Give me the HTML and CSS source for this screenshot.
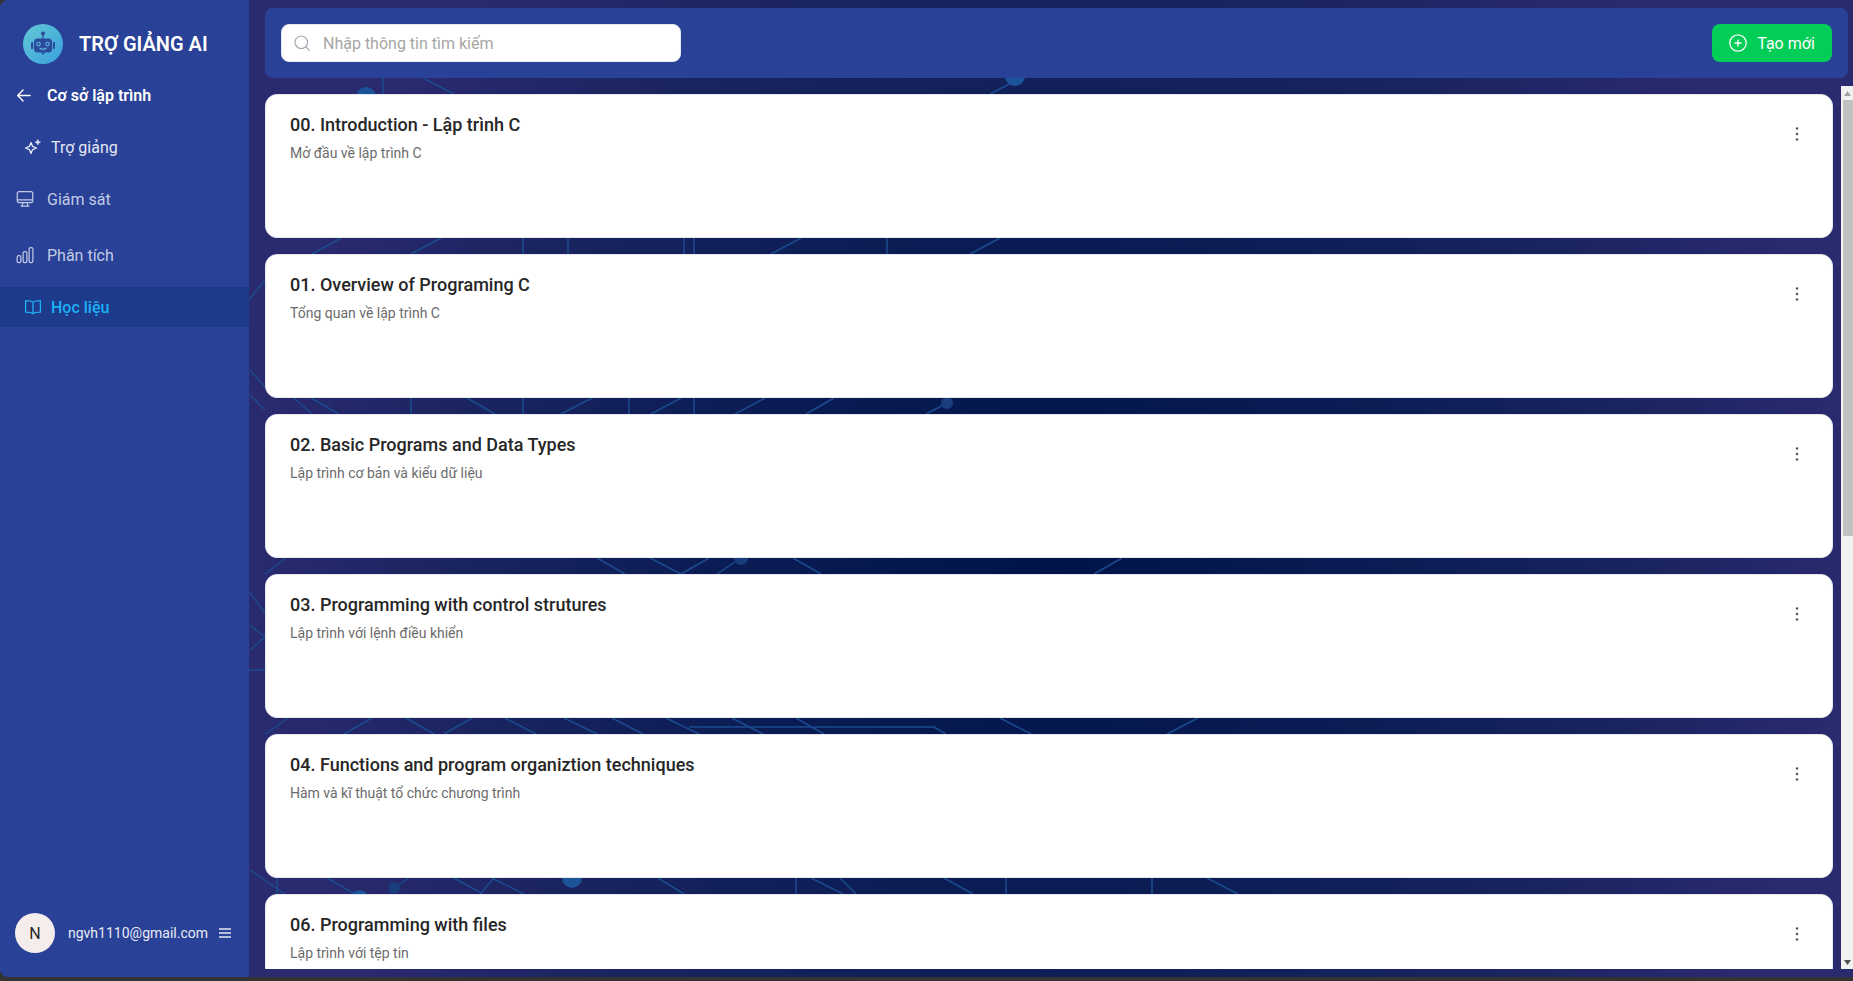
FILE: index.html
```html
<!DOCTYPE html>
<html lang="vi">
<head>
<meta charset="utf-8">
<title>Trợ giảng AI</title>
<link rel="stylesheet" href="styles.css">
</head>
<body>
<div class="app">
  <aside class="sidebar">
    <div class="brand">
      <svg class="brand-logo" viewBox="0 0 40 40">
        <defs><linearGradient id="lg" x1="0" y1="0" x2="1" y2="1"><stop offset="0" stop-color="#62c9d6"/><stop offset="1" stop-color="#3a9fdc"/></linearGradient></defs>
        <circle cx="20" cy="20" r="20" fill="url(#lg)"/>
        <circle cx="20" cy="9.5" r="2" fill="#2b4c9c"/>
        <path d="M20 11v4" stroke="#2b4c9c" stroke-width="1.2"/>
        <rect x="11" y="14.5" width="18" height="14" rx="3.5" fill="#2b4c9c"/>
        <rect x="8" y="18" width="2.2" height="7" rx="1" fill="#2b4c9c"/>
        <rect x="29.8" y="18" width="2.2" height="7" rx="1" fill="#2b4c9c"/>
        <path d="M18 28.5h4l-2 2.5z" fill="#2b4c9c"/>
        <circle cx="15.5" cy="20" r="1.8" fill="none" stroke="#62c0e0" stroke-width="1"/>
        <circle cx="24.5" cy="20" r="1.8" fill="none" stroke="#62c0e0" stroke-width="1"/>
        <path d="M17 24.2q3 2.2 6 0" fill="none" stroke="#62c0e0" stroke-width="1.1" stroke-linecap="round"/>
      </svg>
      <span class="brand-name">TRỢ GIẢNG AI</span>
    </div>
    <nav class="nav">
      <a class="nav-row nav-back">
        <svg class="icon-back" viewBox="0 0 16 16" fill="none" stroke="currentColor" stroke-width="1.5" stroke-linecap="round" stroke-linejoin="round"><path d="M15 8H2M7.5 2.2 1.8 8l5.7 5.8"/></svg>
        <span>Cơ sở lập trình</span>
      </a>
      <a class="nav-row nav-sub nav-light">
        <svg class="icon" viewBox="0 0 18 18" fill="none" stroke="currentColor" stroke-width="1.3" stroke-linejoin="round"><path d="M7 4.5 8.6 8.4 12.5 10 8.6 11.6 7 15.5 5.4 11.6 1.5 10 5.4 8.4z"/><path d="M13.8 1.5 14.6 3.4 16.5 4.2 14.6 5 13.8 6.9 13 5 11.1 4.2 13 3.4z" fill="currentColor" stroke-width=".6"/></svg>
        <span>Trợ giảng</span>
      </a>
      <a class="nav-row nav-top">
        <svg class="icon" viewBox="0 0 18 18" fill="none" stroke="currentColor" stroke-width="1.2" stroke-linejoin="round"><rect x="1.2" y="1.6" width="15.6" height="11" rx="2"/><path d="M1.2 9.8h15.6M6.8 12.6l-.6 3.4M11.2 12.6l.6 3.4M4.6 16.2h8.8"/></svg>
        <span>Giám sát</span>
      </a>
      <a class="nav-row nav-top nav-gap">
        <svg class="icon" viewBox="0 0 18 18" fill="none" stroke="currentColor" stroke-width="1.2"><rect x="1.1" y="9.6" width="3.8" height="7" rx="1.6"/><rect x="7.1" y="5.6" width="3.8" height="11" rx="1.6"/><rect x="13.1" y="1.6" width="3.8" height="15" rx="1.6"/></svg>
        <span>Phân tích</span>
      </a>
      <a class="nav-row nav-sub nav-active">
        <svg class="icon" viewBox="0 0 18 18" fill="none" stroke="currentColor" stroke-width="1.3" stroke-linejoin="round"><path d="M9 4.2C7.4 3 5 2.6 1.6 2.6v11.6c3.4 0 5.8.4 7.4 1.6 1.6-1.2 4-1.6 7.4-1.6V2.6C13 2.6 10.600 3 9 4.200zM9 4.200v11.600"/></svg>
        <span>Học liệu</span>
      </a>
    </nav>
    <div class="account">
      <span class="avatar">N</span>
      <span class="email">ngvh1110@gmail.com</span>
      <svg class="icon-menu" viewBox="0 0 12 10" stroke="currentColor" stroke-width="1.3"><path d="M0 1h12M0 5h12M0 9h12"/></svg>
    </div>
  </aside>

  <main class="main">
    <svg class="circuit" viewBox="249 0 1604 977" aria-hidden="true">
      <g class="trace">
        <path d="M383 78V94M423 78 454 94M1015 81 990 94"/>
        <path d="M341 238 312 254M441 238 411 254M523 238V254M568 238V254M684 238V254M694 238V254M801 238 771 254M887 238V254M1000 238 970 254M265 280 249 300"/>
        <path d="M311 398 339 414M294 398 312 414M411 398V414M467 398 495 414M523 398V414M592 398 561 414M629 398V414M681 398 651 414M694 398V414M765 398 735 414M834 398 806 414M947 403 926 414M250 395 265 410M250 370 265 387"/>
        <path d="M286 558 265 574M597 558 625 574M650 558 681 574M709 558 681 574M741 558 717 574M793 558 821 574M1122 558 1094 574M250 593 265 613M250 625 265 637 250 650M249 670H265"/>
        <path d="M288 718 265 734M372 718 344 734M406 718 434 734M472 718 444 734M505 718 536 734M564 718 597 734M612 718 643 734M666 718 699 734M732 718 763 734M796 718 824 734M1000 718 1031 734M689 727H934L946 734M1198 718 1167 734"/>
        <path d="M277 878V894M250 870 285 894M327 878 355 894M409 878 394 888M454 878 483 894M480 894 494 878M492 878 524 894M658 878 684 894M796 878V894M811 878 843 894M840 878 856 894M944 878 973 894M1006 878V894M1152 878V894M1207 878 1238 894"/>
      </g>
      <g class="node">
        <circle cx="366" cy="97" r="10"/>
        <circle cx="1015" cy="76" r="10"/>
        <circle cx="360" cy="899" r="9"/>
        <circle cx="572" cy="878" r="10"/>
      </g>
      <g class="node node-dim">
        <circle cx="947" cy="403" r="6"/>
        <circle cx="741" cy="558" r="7"/>
        <circle cx="394" cy="888" r="6"/>
      </g>
    </svg>
    <header class="topbar">
      <label class="search">
        <svg class="icon-search" viewBox="0 0 16 16" fill="none" stroke="currentColor" stroke-width="1.2" stroke-linecap="round"><circle cx="7.300" cy="7.300" r="6.300"/><path d="M12 12l3.300 3.300"/></svg>
        <input class="search-input" type="text" placeholder="Nhập thông tin tìm kiếm">
      </label>
      <button class="create" type="button">
        <svg class="icon-plus" viewBox="0 0 18 18" fill="none" stroke="currentColor" stroke-width="1.300"><circle cx="9" cy="9" r="8.200"/><path d="M9 5.500v7M5.500 9h7"/></svg>
        <span>Tạo mới</span>
      </button>
    </header>
    <div class="scroller">
      <section class="list">
        <article class="card">
          <div class="card-text"><h2 class="card-title">00. Introduction - Lập trình C</h2><p class="card-sub">Mở đầu về lập trình C</p></div>
          <svg class="kebab" viewBox="0 0 4 14" fill="currentColor"><circle cx="2" cy="1.500" r="1.300"/><circle cx="2" cy="7" r="1.300"/><circle cx="2" cy="12.500" r="1.300"/></svg>
        </article>
        <article class="card">
          <div class="card-text"><h2 class="card-title">01. Overview of Programing C</h2><p class="card-sub">Tổng quan về lập trình C</p></div>
          <svg class="kebab" viewBox="0 0 4 14" fill="currentColor"><circle cx="2" cy="1.500" r="1.300"/><circle cx="2" cy="7" r="1.300"/><circle cx="2" cy="12.500" r="1.300"/></svg>
        </article>
        <article class="card">
          <div class="card-text"><h2 class="card-title">02. Basic Programs and Data Types</h2><p class="card-sub">Lập trình cơ bản và kiểu dữ liệu</p></div>
          <svg class="kebab" viewBox="0 0 4 14" fill="currentColor"><circle cx="2" cy="1.500" r="1.300"/><circle cx="2" cy="7" r="1.300"/><circle cx="2" cy="12.500" r="1.300"/></svg>
        </article>
        <article class="card">
          <div class="card-text"><h2 class="card-title">03. Programming with control strutures</h2><p class="card-sub">Lập trình với lệnh điều khiển</p></div>
          <svg class="kebab" viewBox="0 0 4 14" fill="currentColor"><circle cx="2" cy="1.500" r="1.300"/><circle cx="2" cy="7" r="1.300"/><circle cx="2" cy="12.500" r="1.300"/></svg>
        </article>
        <article class="card">
          <div class="card-text"><h2 class="card-title">04. Functions and program organiztion techniques</h2><p class="card-sub">Hàm và kĩ thuật tổ chức chương trình</p></div>
          <svg class="kebab" viewBox="0 0 4 14" fill="currentColor"><circle cx="2" cy="1.500" r="1.300"/><circle cx="2" cy="7" r="1.300"/><circle cx="2" cy="12.500" r="1.300"/></svg>
        </article>
        <article class="card">
          <div class="card-text"><h2 class="card-title">06. Programming with files</h2><p class="card-sub">Lập trình với tệp tin</p></div>
          <svg class="kebab" viewBox="0 0 4 14" fill="currentColor"><circle cx="2" cy="1.500" r="1.300"/><circle cx="2" cy="7" r="1.300"/><circle cx="2" cy="12.500" r="1.300"/></svg>
        </article>
      </section>
      <div class="scrollbar" aria-hidden="true">
        <svg class="arrow" viewBox="0 0 7 5"><path d="M3.500 0 7 5H0z" fill="#a3a3a3"/></svg>
        <div class="track"><div class="thumb"></div></div>
        <svg class="arrow" viewBox="0 0 7 5"><path d="M0 0H7L3.500 5z" fill="#505050"/></svg>
      </div>
    </div>
  </main>
</div>
</body>
</html>
```
FILE: styles.css
```css
* { box-sizing: border-box; }
html, body { height: 100%; margin: 0; overflow: hidden; }
body { background: #333333; font-family: Roboto, "Noto Sans", sans-serif; }

.app { display: flex; height: 977px; }

.sidebar {
  width: 249px; flex: none; display: flex; flex-direction: column;
  background: #294196; border-radius: 8px 0 0 8px; color: #c3cbe6;
}
.brand { display: flex; align-items: center; gap: 16px; padding: 24px 0 0 23px; }
.brand-logo { width: 40px; height: 40px; flex: none; }
.brand-name { font-size: 20px; font-weight: 600; color: #fff; line-height: 40px; }

.nav { display: flex; flex-direction: column; gap: 12px; margin-top: 11px; }
.nav-row { display: flex; align-items: center; height: 40px; font-size: 16px; }
.nav-back { padding-left: 16px; gap: 16px; color: #fff; font-weight: 600; }
.icon-back { width: 15px; height: 15px; flex: none; }
.icon { width: 18px; height: 18px; flex: none; }
.nav-top { padding-left: 16px; gap: 13px; }
.nav-sub { padding-left: 24px; gap: 9px; }
.nav-light { color: #e6e9f5; }
.nav-gap { margin-top: 4px; }
.nav-active { background: #1e3a8a; color: #1cb0f6; font-weight: 500; }

.account { display: flex; align-items: center; margin-top: auto; padding: 0 0 24px 15px; }
.avatar {
  width: 40px; height: 40px; flex: none; display: flex; align-items: center; justify-content: center;
  border-radius: 50%; background: #f5ecec; color: #262626; font-size: 16px;
}
.email { margin-left: 13px; font-size: 14px; color: #e8ebf6; }
.icon-menu { width: 12px; height: 10px; margin-left: 11px; color: #e2e6f4; flex: none; }

.main {
  position: relative; isolation: isolate; flex: 1; min-width: 0; display: flex; flex-direction: column;
  padding: 8px 0 8px;
  background: radial-gradient(ellipse 802px 800px at 50% 57%, #00144a 0%, #0a1c53 40%, #1a2460 75%, #2a2a6e 100%);
}
.circuit { position: absolute; left: 0; top: 0; width: 1604px; height: 977px; z-index: -1; }
.trace { fill: none; stroke: #1b4b8e; stroke-width: 1.500; }
.node { fill: #1c5499; }
.node-dim { fill: #1a3d7e; }

.topbar {
  flex: none; display: flex; align-items: center; justify-content: space-between;
  height: 70px; margin: 0 5px 0 16px; padding: 0 16px;
  background: #294196; border-radius: 8px;
}
.search {
  display: flex; align-items: center; gap: 13px; width: 400px; height: 38px; padding: 0 12px;
  background: #fff; border-radius: 8px; border: 1px solid #e5e7eb; color: #a3a8b3;
}
.icon-search { width: 16px; height: 16px; flex: none; }
.search-input {
  flex: 1; min-width: 0; border: 0; outline: 0; padding: 0; background: none;
  font: 400 16px Roboto, sans-serif; color: #333;
}
.search-input::placeholder { color: #a6a6a6; opacity: 1; }
.create {
  display: flex; align-items: center; justify-content: center; gap: 10px; width: 120px; height: 38px;
  border: 0; padding: 0; background: #02cd56; color: #fff; border-radius: 8px;
  font: 400 16px Roboto, sans-serif;
}
.icon-plus { width: 18px; height: 18px; flex: none; }

.scroller { flex: 1; min-height: 0; display: flex; gap: 8px; margin: 8px 0 0 16px; }
.list {
  flex: 1; min-width: 0; overflow: hidden; display: flex; flex-direction: column; gap: 16px;
  padding-top: 8px;
}
.scrollbar { width: 12px; flex: none; display: flex; flex-direction: column; align-items: center; background: #f1f1f1; }
.arrow { width: 7px; height: 5px; margin: 5px 0 4px; flex: none; }
.track { flex: 1; min-height: 0; width: 100%; padding-left: 2px; }
.thumb { height: 51%; background: #c1c1c1; }

.card {
  flex: none; display: flex; justify-content: space-between; height: 144px;
  padding: 16px 33px 0 24px; background: #fff; border: 1px solid #e5e7eb; border-radius: 12px;
}
.card-title { margin: 0; font-size: 18px; font-weight: 500; line-height: 28px; color: #262626; }
.card-sub { margin: 3px 0 0; font-size: 14px; line-height: 22px; color: #6b6b6b; }
.kebab { width: 4px; height: 14px; margin-top: 16px; color: #595959; flex: none; }
```
